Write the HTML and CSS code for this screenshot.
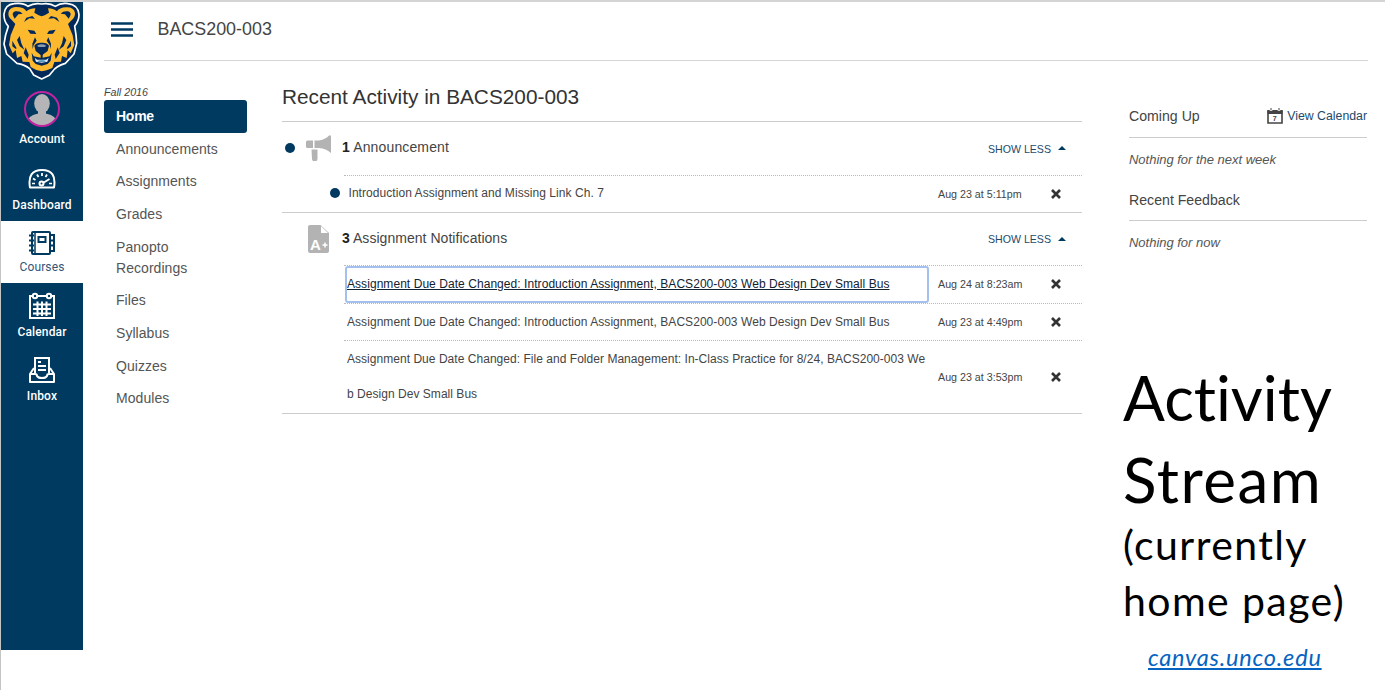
FILE: index.html
```
<!DOCTYPE html>
<html lang="en">
<head>
<meta charset="utf-8">
<title>BACS200-003</title>
<link rel="stylesheet" href="styles.css">
</head>
<body>
<div class="slide">
  <nav class="global-nav">
    <a class="logo">
      <svg width="82" height="80" viewBox="3 0 246 240">
        <path d="M125 12Q150 8 166 19Q182 8 204 11Q234 14 237 44Q237 62 224 78Q229 105 230 130L222 162L196 190Q168 198 158 214L148 226L125 237L101 225L89 206Q75 194 51 190L20 162L12 132Q15 105 25 79Q11 64 12 42Q15 14 42 11Q68 7 84 19Q102 8 125 12Z" fill="#03285a" stroke="#fff" stroke-width="5" stroke-linejoin="round"/>
        <path d="M36 61Q20 48 27 32Q36 17 59 22Q73 24 79 34Q90 25 106 25L103 38L116 46L125 49L134 46L147 38L144 25Q160 25 171 34Q178 23 198 22Q222 21 225 39Q226 53 213 62L204 72L218 106L223 135L212 160L203 150L200 174L186 168L183 185L163 186L157 204L140 211L125 214L109 210L92 201L88 186L68 185L64 168L51 174L47 150L38 160L27 135L32 106L46 72Z" fill="#fdb92d"/>
        <g fill="#03285a">
          <path d="M40 49Q34 38 46 34Q60 32 68 41L55 43L44 56ZM210 49Q216 38 204 34Q190 32 182 41L195 43L206 56Z"/>
          <path d="M79 53L97 48L105 56L88 55L72 66ZM171 53L153 48L145 56L162 55L178 66Z"/>
          <path d="M83 89L103 92L109 102L91 101ZM167 89L147 92L141 102L159 101Z"/>
          <path d="M103 137Q109 127 125 128Q141 127 147 137L143 153L127 165H122L107 153Z"/>
          <path d="M105 112L110 122L101 135L98 148L97 131ZM145 112L140 122L149 135L152 148L153 131Z"/>
          <path d="M122 161H128V173L149 169L155 158L152 182L143 192L125 197L107 192L98 182L95 158L101 169L122 173Z"/>
          <path d="M59 108L64 130L73 149L59 139L51 120ZM191 108L186 130L177 149L191 139L199 120ZM37 122L50 145L47 147L37 139ZM213 122L200 145L203 147L213 139ZM77 142L86 164L83 177L71 159ZM173 142L164 164L167 177L179 159Z"/>
        </g>
        <path d="M111 137Q125 129 139 137L134 141H116Z" fill="#8d9bae"/>
        <path d="M104 173L111 179H139L146 173L142 185L125 188L108 185Z" fill="#e8f1f7"/><path d="M112 183Q125 177 138 183L135 186H115Z" fill="#5b9bc0"/>
      </svg>
    </a>
    <a class="gitem account">
      <svg width="38" height="38" viewBox="0 0 38 38">
        <defs><clipPath id="disc"><circle cx="19" cy="19" r="16.5"/></clipPath></defs>
        <g clip-path="url(#disc)" fill="#b5b5b7"><ellipse cx="19" cy="13.500" rx="7.800" ry="9.500"/><path d="M15 18H23V25H15ZM4 37Q2 26 15 23.500L19 25L23 23.500Q36 26 34 37Z"/></g>
        <circle cx="19" cy="19" r="17" fill="none" stroke="#c2239f" stroke-width="2"/>
      </svg>
      <span>Account</span>
    </a>
    <a class="gitem dashboard">
      <svg width="28" height="22" viewBox="0 0 28 22" fill="none" stroke="#fff" stroke-width="2">
        <path d="M2 19.500Q-1 2 14 2Q29 2 26 19.500Z" stroke-linejoin="round"/>
        <path d="M14 5V8M9 6.500L10.500 9M19 6.500L17.500 9M5 10.500L7.500 12M15 15L21.500 11" stroke-width="1.800"/><path d="M4 15.500H7M21 15.500H24" stroke-width="1.500"/><circle cx="13.500" cy="15.500" r="2"/>
      </svg>
      <span>Dashboard</span>
    </a>
    <a class="gitem courses">
      <svg width="28" height="26" viewBox="0 0 28 26" fill="none" stroke="#003a60" stroke-width="2">
        <rect x="4" y="2" width="18" height="22" rx="1"/><path d="M7 2V24" stroke-width="1.500"/><rect x="10.500" y="7" width="7" height="5"/>
        <path d="M1 5.500H6M1 10.500H6M1 15.500H6M1 20.500H6M22 5H26V21H22M22 10.500H26M22 15.500H26"/>
      </svg>
      <span>Courses</span>
    </a>
    <a class="gitem calendar">
      <svg width="28" height="28" viewBox="0 0 28 28" fill="none" stroke="#fff" stroke-width="2">
        <path d="M5 4H2V26H26V4H23M9 4H19"/><circle cx="7" cy="4" r="2.200"/><circle cx="21" cy="4" r="2.200"/>
        <path d="M5 12.500H23M5 17H23M5 21.500H23M9.500 9.500V24M14 9.500V24M18.500 9.500V24" stroke-width="2"/>
      </svg>
      <span>Calendar</span>
    </a>
    <a class="gitem inbox">
      <svg width="28" height="28" viewBox="0 0 28 28" fill="none" stroke="#fff" stroke-width="2">
        <path d="M7 17V2H21V17M10 6H13M10 10H18M10 14H18"/>
        <path d="M6 12L2 18V26H26V18L22 12M2 18H7Q9 18 9 20Q10 22 14 22Q18 22 19 20Q19 18 21 18H26" stroke-linejoin="round"/>
      </svg>
      <span>Inbox</span>
    </a>
  </nav>

  <div class="page">
    <header class="crumbs">
      <svg width="22" height="15" viewBox="0 0 22 15"><path d="M0 1.500H22M0 7.500H22M0 13.500H22" stroke="#003a60" stroke-width="2.600"/></svg>
      <span class="crumb">BACS200-003</span>
    </header>
    <div class="columns">
      <nav class="course-nav">
        <div class="term">Fall 2016</div>
        <a class="active">Home</a>
        <a>Announcements</a>
        <a>Assignments</a>
        <a>Grades</a>
        <a>Panopto<br>Recordings</a>
        <a>Files</a>
        <a>Syllabus</a>
        <a>Quizzes</a>
        <a>Modules</a>
      </nav>

      <main class="activity">
        <h1>Recent Activity in BACS200-003</h1>
        <section class="group">
          <div class="group-head">
            <i class="dot"></i>
            <svg class="gicon" width="26" height="28" viewBox="0 0 26 28" fill="#b3b3b3"><path d="M1.500 6.500H7V14H1.500Q0 14 0 12.500V8Q0 6.500 1.500 6.500M8.500 6.500H13Q20 5 23 1.500H25V19Q20 14.500 13 14H8.500ZM5.500 15.500H11.500V25Q11.500 27 10 27H7.500Q6 27 6 25Z"/></svg>
            <span class="gtitle wide"><b>1</b> Announcement</span>
            <span class="less">SHOW LESS</span><i class="caret"></i>
          </div>
          <div class="row unread">
            <i class="dot"></i>
            <a class="subject">Introduction Assignment and Missing Link Ch. 7</a>
            <span class="date">Aug 23 at 5:11pm</span>
            <svg class="x" width="10" height="10" viewBox="0 0 10 10"><path d="M1 1L9 9M9 1L1 9"/></svg>
          </div>
        </section>
        <section class="group">
          <div class="group-head">
            <i class="dot none"></i>
            <svg class="gicon doc" width="26" height="30" viewBox="0 0 26 30"><path d="M4 1H14.500L23 9V27Q23 29 21 29H4Q2 29 2 27V3Q2 1 4 1" fill="#b3b3b3"/><path d="M15 2V9H22Z" fill="#fff"/><text x="4" y="26" class="grade">A</text><path d="M16.500 21H21.500M19 18.500V23.500" stroke="#fff" stroke-width="1.500"/></svg>
            <span class="gtitle"><b>3</b> Assignment Notifications</span>
            <span class="less">SHOW LESS</span><i class="caret"></i>
          </div>
          <div class="row">
            <a class="subject focused">Assignment Due Date Changed: Introduction Assignment, BACS200-003 Web Design Dev Small Bus</a>
            <span class="date">Aug 24 at 8:23am</span>
            <svg class="x" width="10" height="10" viewBox="0 0 10 10"><path d="M1 1L9 9M9 1L1 9"/></svg>
          </div>
          <div class="row">
            <a class="subject">Assignment Due Date Changed: Introduction Assignment, BACS200-003 Web Design Dev Small Bus</a>
            <span class="date">Aug 23 at 4:49pm</span>
            <svg class="x" width="10" height="10" viewBox="0 0 10 10"><path d="M1 1L9 9M9 1L1 9"/></svg>
          </div>
          <div class="row tall">
            <a class="subject">Assignment Due Date Changed: File and Folder Management: In-Class Practice for 8/24, BACS200-003 We<br>b Design Dev Small Bus</a>
            <span class="date">Aug 23 at 3:53pm</span>
            <svg class="x" width="10" height="10" viewBox="0 0 10 10"><path d="M1 1L9 9M9 1L1 9"/></svg>
          </div>
        </section>
      </main>

      <aside class="side">
        <div class="side-head"><h2>Coming Up</h2>
          <a class="view"><svg width="16" height="16" viewBox="0 0 16 16"><path d="M1 3H15V15H1Z" fill="none" stroke="#444" stroke-width="1.600"/><path d="M0.500 2H15.500V6H0.500Z" fill="#444"/><path d="M4 0V3M12 0V3" stroke="#fff" stroke-width="2.500"/><path d="M4 0V2.500M12 0V2.500" stroke="#444"/><text x="5.800" y="13" class="day">7</text></svg>View Calendar</a>
        </div>
        <p>Nothing for the next week</p>
        <div class="side-head second"><h2>Recent Feedback</h2></div>
        <p>Nothing for now</p>
        <div class="caption">
          <div class="big"><span class="first">Activity</span><br>Stream</div>
          <div class="small">(currently<br>home page)</div>
          <a class="url">canvas.unco.edu</a>
        </div>
      </aside>
    </div>
  </div>
</div>
</body>
</html>
```
FILE: styles.css
```
* { box-sizing: border-box; }
body { margin: 0; background: #fff; font-family: "Liberation Sans", Arial, sans-serif; color: #444; }
h1, h2, p { margin: 0; font-weight: normal; }
.slide { width: 1385px; height: 690px; display: flex; align-items: flex-start; border-left: 1px solid #c4c4c4; border-top: 2px solid #d4d4d4; overflow: hidden; }

.global-nav { width: 82px; height: 648px; background: #003a60; display: flex; flex-direction: column; flex: none; }
.logo { height: 80px; }
.logo svg { display: block; margin-top: -2px; }
.gitem { display: flex; flex-direction: column; align-items: center; color: #fff; font: 500 12px/16px Roboto, sans-serif; letter-spacing: 0.15px; height: 64px; }
.account { height: 76px; padding-top: 8px; }
.account span { margin-top: 3px; }
.dashboard { height: 63px; padding-top: 10px; }
.dashboard span { margin-top: 7px; }
.courses { height: 62px; background: #fff; color: #335577; font-weight: 400; padding-top: 9px; }
.courses span { margin-top: 3px; }
.calendar { padding-top: 9px; }
.calendar span { margin-top: 4px; }
.inbox { padding-top: 9px; }
.inbox span { margin-top: 4px; }

.page { flex: 1; padding: 0 17px 0 21px; }
.crumbs { height: 59px; border-bottom: 1px solid #d6d6d6; padding: 0 0 4px 7px; display: flex; align-items: center; gap: 24.5px; font-size: 17.9px; }
.columns { display: grid; grid-template-columns: 143px 800px 238px; }
.activity { margin-left: 35px; margin-right: -35px; }
.side { margin-left: 82px; margin-right: -82px; }

.course-nav { padding-top: 24px; font-size: 14px; line-height: 21px; letter-spacing: 0.05px; }
.term { font-size: 10.7px; font-style: italic; line-height: 14px; padding-bottom: 1px; letter-spacing: 0; }
.course-nav a { display: block; padding: 5.85px 12px; color: #555; }
.course-nav .active { background: #003a60; color: #fff; border-radius: 3px; font-weight: bold; letter-spacing: -0.25px; }

h1 { font-size: 20.8px; line-height: 24px; padding: 24px 0 12px; color: #333; }
.group { border-top: 1px solid #ccc; }
.group:last-child { border-bottom: 1px solid #ccc; }
.group-head { height: 52.5px; display: flex; align-items: center; padding: 0 16px 1px 3px; font-size: 14px; }
.dot { width: 10px; height: 10px; border-radius: 50%; background: #003a60; flex: none; }
.none { visibility: hidden; }
.gicon { margin-left: 10.5px; margin-right: 10.5px; }
.doc { margin-top: 2px; }
.gtitle { margin-top: -1px; letter-spacing: 0.04px; }
.wide { letter-spacing: 0.14px; }
.gtitle b { color: #222; }
.less { margin-left: auto; margin-top: 2px; font-size: 10.6px; color: #1d4a6c; }
.caret { border: 4px solid transparent; border-bottom-color: #003a60; border-top: 0; margin: 1px 0 0 7px; }
.row { height: 37.7px; margin-left: 62px; border-top: 1px dotted #bbb; display: grid; grid-template-columns: 584px 85px 1fr; align-items: center; font-size: 12px; color: #444; position: relative; }
.row .subject { line-height: 34.7px; padding-left: 3px; white-space: nowrap; letter-spacing: 0.057px; }
.row .date { font-size: 10.7px; padding-left: 10px; white-space: nowrap; }
.row .x { margin-left: 38px; }
.x path { stroke: #333; stroke-width: 2.6; }
.unread { height: 37px; }
.row.unread .subject { padding-left: 4.5px; }
.unread > .dot { position: absolute; left: -14px; top: 12px; }
.row .focused { outline: 2px solid #a4c0ee; outline-offset: -1px; text-decoration: underline; color: #123; margin-left: 2px; padding-left: 1px; border-radius: 2px; }
.tall { height: 72.4px; }
.row.tall .subject { letter-spacing: 0.035px; }
.grade { font: bold 15px "Liberation Sans", sans-serif; fill: #fff; }

.side-head { display: flex; justify-content: space-between; align-items: center; width: 238px; height: 42px; padding-bottom: 1px; border-bottom: 1px solid #ccc; margin-top: 35px; }
.side-head h2 { font-size: 14.15px; }
.view { display: flex; gap: 4px; align-items: center; font-size: 12.3px; color: #1d4a6c; }
.day { font: bold 7px "Liberation Sans", sans-serif; fill: #444; }
.side p { font-size: 13px; font-style: italic; line-height: 43px; height: 42px; letter-spacing: -0.02px; color: #555; }
.side .second { margin-top: -1px; padding: 1px 0 0; }
.caption { color: #000; font-family: Lato, sans-serif; font-variant-ligatures: none; white-space: nowrap; margin-left: -6px; margin-top: 93px; }
.big { font-size: 62px; line-height: 82px; letter-spacing: 1.5px; }
.first { letter-spacing: 0; }
.small { font-size: 41px; line-height: 56px; letter-spacing: 1.4px; margin-top: -3px; }
.url { display: block; margin-left: 25px; font-size: 23.5px; font-style: italic; line-height: 56px; letter-spacing: 0.8px; color: #0563c1; text-decoration: underline; }
```
